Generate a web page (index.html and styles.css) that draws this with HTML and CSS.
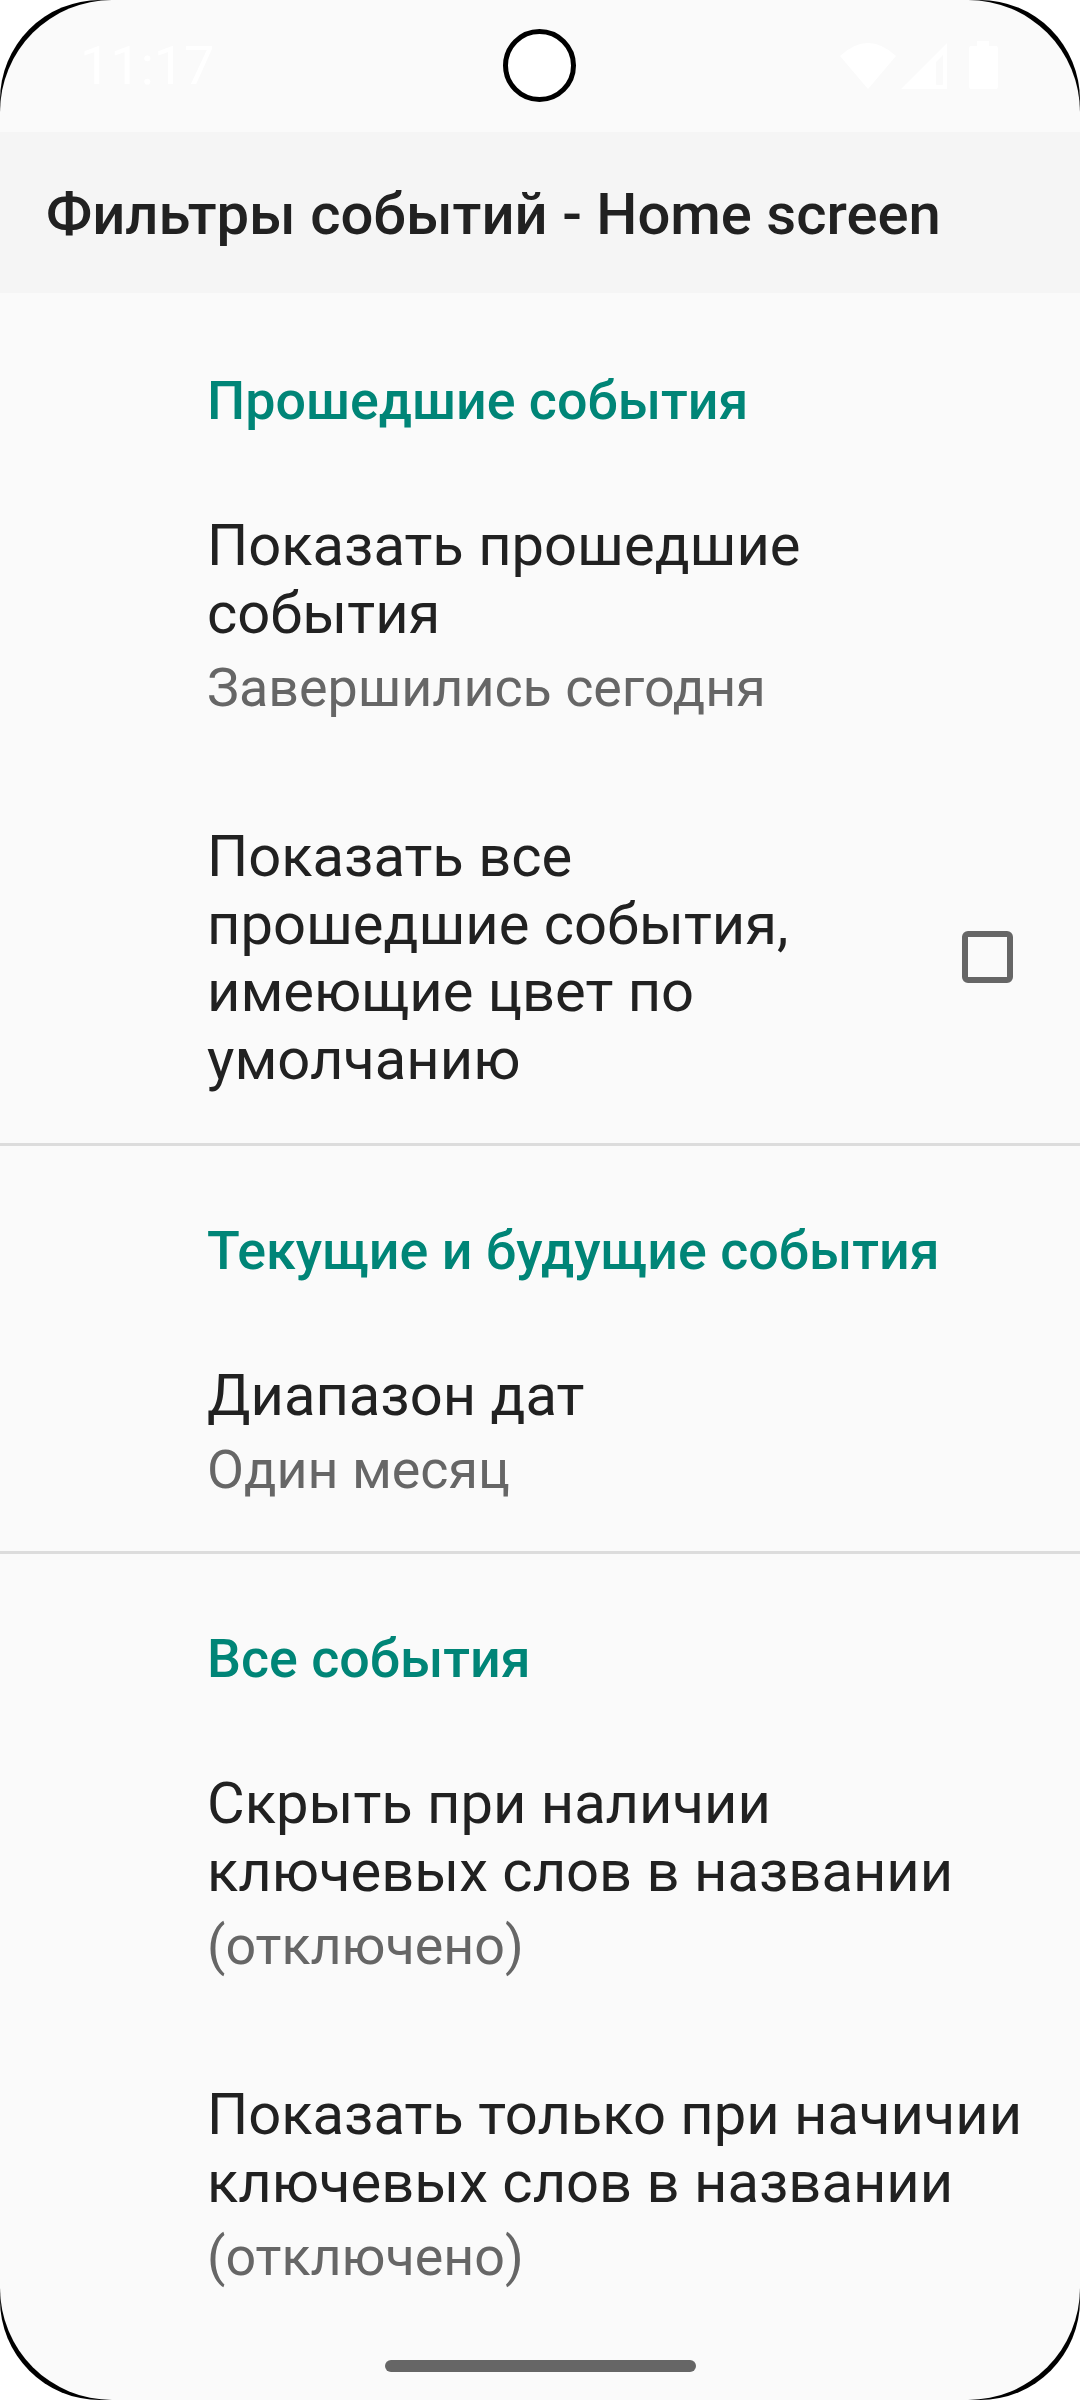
FILE: index.html
```html
<!DOCTYPE html>
<html lang="ru">
<head>
  <meta charset="UTF-8" />
  <meta name="viewport" content="width=device-width, initial-scale=1.0" />
  <title>Фильтры событий</title>
  <link rel="stylesheet" href="styles.css">
</head>
<body>
  <div class="bezel">
    <div class="screen">
      <div class="statusbar">
        <span class="clock">11:17</span>
        <div class="status-icons">
          <svg width="56" height="46" viewBox="0 0 56 46"><path d="M0 13 Q28 -13 56 13 L28 46 Z" fill="#fff"/></svg>
          <svg class="signal" width="46" height="46" viewBox="0 0 46 46"><path d="M46 0 V46 H0 Z M35 19 V41 Q35 42 36 42 H41 Q42 42 42 41 V12 Z" fill="#fff" fill-rule="evenodd"/></svg>
          <svg class="battery" width="29" height="48" viewBox="0 0 29 48"><path d="M8 0 H20 V5 H27 Q29 5 29 7 V46 Q29 48 27 48 H2 Q0 48 0 46 V7 Q0 5 2 5 H8 Z" fill="#fff"/></svg>
        </div>
      </div>
      <div class="camera"></div>

      <div class="appbar">Фильтры событий - Home screen</div>

      <section class="group">
        <h3 class="group-title">Прошедшие события</h3>
        <div class="pref">
          <div class="pref-text">
            <div class="pref-name">Показать прошедшие события</div>
            <div class="pref-sub">Завершились сегодня</div>
          </div>
        </div>
        <div class="pref">
          <div class="pref-text narrow">
            <div class="pref-name">Показать все прошедшие события, имеющие цвет по умолчанию</div>
          </div>
          <div class="checkbox"></div>
        </div>
      </section>

      <section class="group">
        <h3 class="group-title">Текущие и будущие события</h3>
        <div class="pref">
          <div class="pref-text">
            <div class="pref-name">Диапазон дат</div>
            <div class="pref-sub">Один месяц</div>
          </div>
        </div>
      </section>

      <section class="group last">
        <h3 class="group-title">Все события</h3>
        <div class="pref">
          <div class="pref-text">
            <div class="pref-name">Скрыть при наличии ключевых слов в названии</div>
            <div class="pref-sub">(отключено)</div>
          </div>
        </div>
        <div class="pref">
          <div class="pref-text">
            <div class="pref-name">Показать только при начичии ключевых слов в названии</div>
            <div class="pref-sub">(отключено)</div>
          </div>
        </div>
      </section>

      <div class="home-bar"></div>
    </div>
  </div>
</body>
</html>
```

FILE: styles.css
```css
html, body {
  margin: 0;
  padding: 0;
  background-color: white;
}
body {
  font-family: Roboto, "Noto Sans", sans-serif;
}
.bezel {
  width: 1080px;
  height: 2400px;
  background-color: black;
  border-radius: 100px;
}
.screen {
  position: relative;
  width: 1080px;
  height: 2400px;
  background-color: #fafafa;
  border-radius: 112px;
  overflow: hidden;
}
.statusbar {
  height: 132px;
  display: flex;
  justify-content: space-between;
  align-items: flex-start;
  box-sizing: border-box;
  padding: 41px 82px 0 80px;
}
.clock {
  color: white;
  font-size: 54px;
  line-height: 50px;
}
.status-icons {
  display: flex;
  align-items: flex-end;
}
.signal {
  margin-left: 5px;
  margin-right: 22px;
}
.camera {
  position: absolute;
  left: 503px;
  top: 29px;
  width: 73px;
  height: 73px;
  box-sizing: border-box;
  background-color: white;
  border: 5px solid black;
  border-radius: 50%;
}
.appbar {
  height: 161px;
  margin-bottom: 3px;
  background-color: #f5f5f5;
  padding-left: 46px;
  font-size: 58px;
  font-weight: 500;
  line-height: 165px;
  color: #212121;
}
.group {
  border-bottom: 3px solid #dcdcdc;
  padding-top: 73px;
  padding-bottom: 50px;
}
.group.last {
  border-bottom: none;
}
.group-title {
  margin: 0 0 79px 207px;
  font-size: 53.8px;
  font-weight: 500;
  line-height: 64px;
  color: #008577;
}
.pref {
  display: flex;
  align-items: center;
  padding: 0 67px 104.5px 207px;
}
.pref:last-child {
  padding-bottom: 0;
}
.pref-text {
  flex: 1;
  margin-right: -20px;
}
.pref-text.narrow {
  margin-right: 100px;
}
.pref-name {
  font-size: 57.9px;
  line-height: 67.5px;
  color: #212121;
}
.pref-sub {
  font-size: 53.8px;
  line-height: 62px;
  margin-top: 9.5px;
  color: #666666;
}
.checkbox {
  width: 51px;
  height: 52px;
  margin-top: -3px;
  box-sizing: border-box;
  border: 6px solid #666666;
  border-radius: 6px;
  flex-shrink: 0;
}
.home-bar {
  position: absolute;
  left: 385px;
  top: 2360px;
  width: 311px;
  height: 12px;
  border-radius: 6px;
  background-color: #666666;
}
```
